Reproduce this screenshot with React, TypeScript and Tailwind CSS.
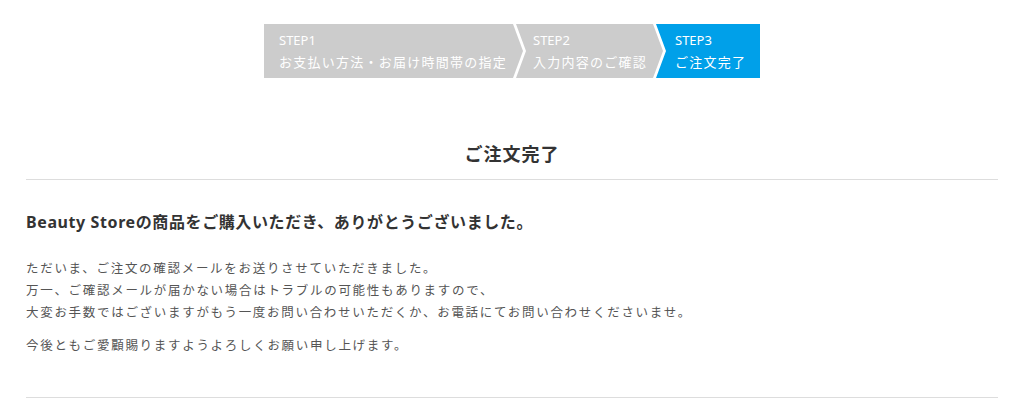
const steps = [
  {
    label: "STEP1",
    text: "お支払い方法・お届け時間帯の指定",
    box: "w-[259px] pl-[15px] bg-[#cccccc] [clip-path:polygon(0_0,calc(100%_-_10px)_0,100%_50%,calc(100%_-_10px)_100%,0_100%)]",
  },
  {
    label: "STEP2",
    text: "入力内容のご確認",
    box: "w-[147px] -ml-[7px] pl-[17px] bg-[#cccccc] [clip-path:polygon(0_0,calc(100%_-_10px)_0,100%_50%,calc(100%_-_10px)_100%,0_100%,10px_50%)]",
  },
  {
    label: "STEP3",
    text: "ご注文完了",
    box: "w-[104px] -ml-[7px] pl-[19px] bg-[#00a0e9] [clip-path:polygon(0_0,100%_0,100%_100%,0_100%,10px_50%)]",
  },
];

export default function App() {
  return (
    <div className="w-[1024px] h-[413px] bg-white font-['Noto_Sans','Noto_Sans_CJK_JP',sans-serif] overflow-hidden">
      <div className="flex justify-center pt-[24px]">
        <div className="flex">
          {steps.map((s) => (
            <div
              key={s.label}
              className={`h-[54px] flex flex-col justify-center text-white text-[13px] leading-[22px] tracking-[1.25px] ${s.box}`}
            >
              <span className="tracking-[0px]">{s.label}</span>
              <span className="whitespace-nowrap">{s.text}</span>
            </div>
          ))}
        </div>
      </div>

      <div className="mx-[26px]">
        <h2 className="mt-[63px] text-center text-[18px] leading-[26px] font-bold text-[#333] tracking-[1px]">
          ご注文完了
        </h2>
        <div className="mt-[12px] border-t border-[#dddddd]" />

        <div className="pt-[30px] pb-[40px] border-b border-[#dddddd]">
          <h3 className="text-[16px] leading-[24px] font-bold text-[#333] tracking-[0.6px]">
            Beauty Storeの商品をご購入いただき、ありがとうございました。
          </h3>
          <p className="mt-[24px] text-[12.5px] leading-[22px] text-[#555] tracking-[1.7px]">
            ただいま、ご注文の確認メールをお送りさせていただきました。
            <br />
            万一、ご確認メールが届かない場合はトラブルの可能性もありますので、
            <br />
            大変お手数ではございますがもう一度お問い合わせいただくか、お電話にてお問い合わせくださいませ。
          </p>
          <p className="mt-[11px] text-[12.5px] leading-[22px] text-[#555] tracking-[1.7px]">
            今後ともご愛顧賜りますようよろしくお願い申し上げます。
          </p>
        </div>
      </div>
    </div>
  );
}
